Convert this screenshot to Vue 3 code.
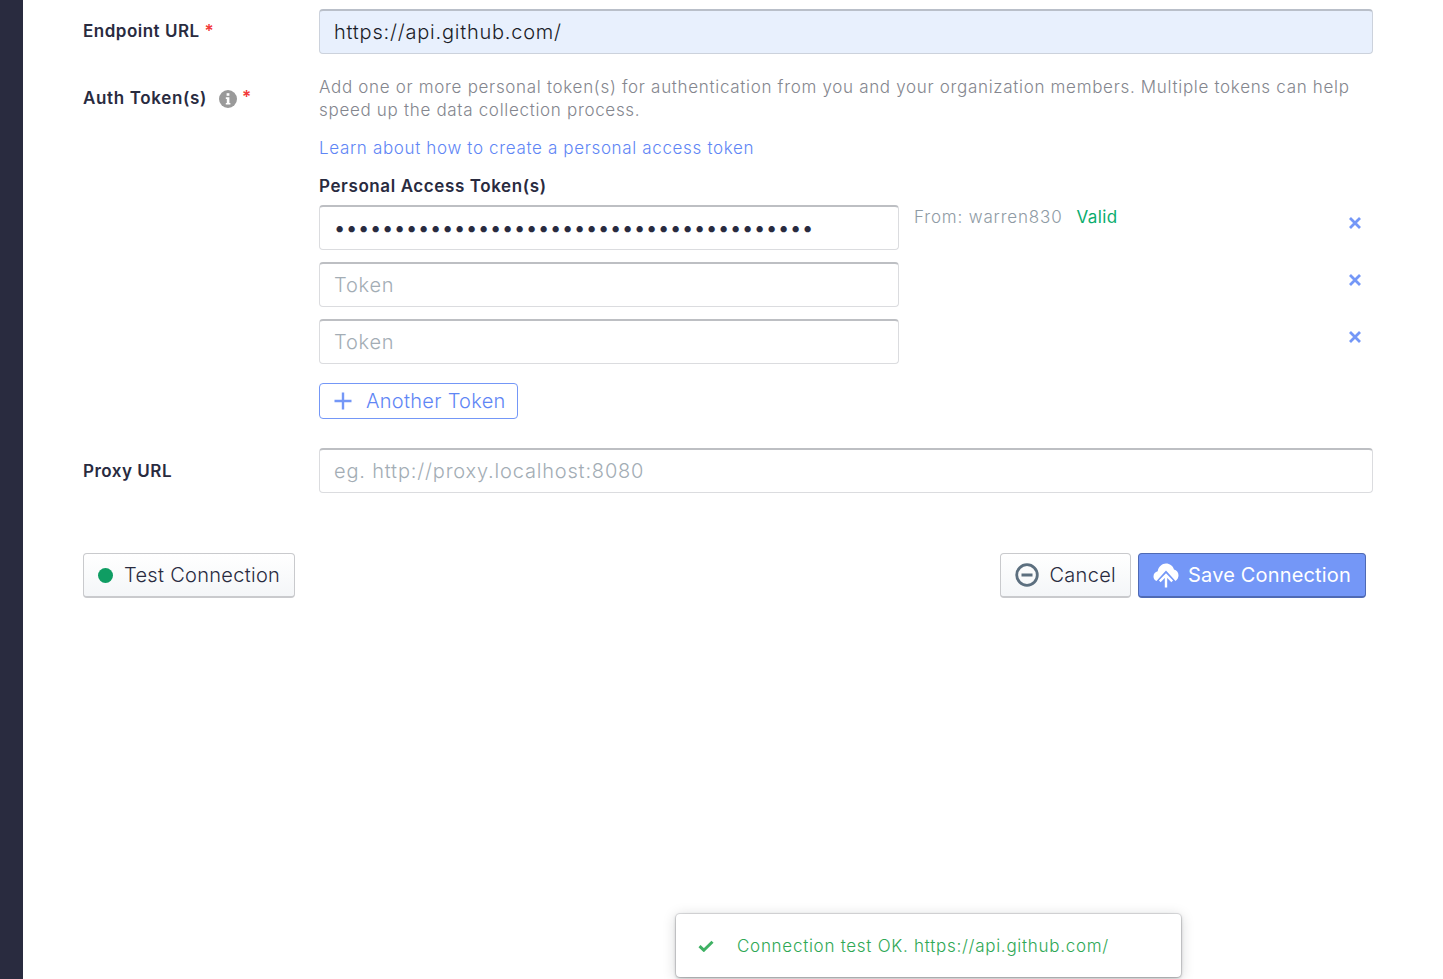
<script setup>
const tokens = [
  { value: 'ghp_0123456789abcdefghijklmnopqrstuvwxyz', type: 'password', meta: true },
  { value: '', type: 'text', meta: false },
  { value: '', type: 'text', meta: false },
]
</script>

<template>
  <div class="shell">
    <aside class="rail"></aside>
    <main class="page">
      <div class="row endpoint">
        <label class="label"><span>Endpoint URL</span><span class="req">*</span></label>
        <input class="field filled" value="https://api.github.com/" />
      </div>

      <div class="row auth">
        <label class="label auth-label">
          <span>Auth Token(s)</span>
          <svg class="info" viewBox="0 0 18 18" width="18" height="18">
            <circle cx="9" cy="9" r="9" fill="#9a9a9a" />
            <rect x="7.600" y="3.200" width="2.800" height="2.600" fill="#fff" />
            <path d="M6.800 7.300h3.600v5.600h1v1.600H6.800v-1.600h1v-4H6.800z" fill="#fff" />
          </svg>
          <span class="req">*</span>
        </label>
        <div class="auth-body">
          <p class="help">Add one or more personal token(s) for authentication from you and your organization members. Multiple tokens can help speed up the data collection process.</p>
          <a class="learn">Learn about how to create a personal access token</a>
          <div class="pat">Personal Access Token(s)</div>
          <div class="tokens">
            <div v-for="(t, i) in tokens" :key="i" class="token-row">
              <input class="field token" :type="t.type" :value="t.value" placeholder="Token" />
              <div class="meta">
                <template v-if="t.meta">
                  <span class="from">From: warren830</span>
                  <span class="valid">Valid</span>
                </template>
              </div>
              <svg class="remove" viewBox="0 0 14 14" width="14" height="14">
                <path d="M2 2l10 10M12 2L2 12" stroke="#7497f7" stroke-width="2.800" fill="none" />
              </svg>
            </div>
          </div>
          <button class="another">
            <svg viewBox="0 0 18 18" width="18" height="18">
              <path d="M9 0.500v17M0.500 9h17" stroke="#7497f7" stroke-width="2.400" fill="none" />
            </svg>
            <span>Another Token</span>
          </button>
        </div>
      </div>

      <div class="row proxy">
        <label class="label">Proxy URL</label>
        <input class="field proxy-input" placeholder="eg. http://proxy.localhost:8080" />
      </div>

      <div class="actions">
        <button class="btn">
          <span class="dot"></span>
          Test Connection
        </button>
        <div class="actions-right">
          <button class="btn cancel">
            <svg viewBox="0 0 24 24" width="24" height="24">
              <circle cx="12" cy="12" r="10.300" stroke="#5c6f7f" stroke-width="2.800" fill="none" />
              <path d="M6.500 12h11" stroke="#5c6f7f" stroke-width="3" />
            </svg>
            Cancel
          </button>
          <button class="btn save">
            <svg viewBox="0 0 26 26" width="26" height="26">
              <path d="M3.500 19C1.500 18 .5 16.500 .5 14.500c0-2.600 1.800-4.700 4.200-5.200C5.500 4.600 9 1.500 13 1.500c3.800 0 7 2.500 8 6 2.600.6 4.500 3 4.500 5.800 0 2.200-1 4.300-3 5.700L13 8.500z" fill="#fff" />
              <path d="M13 25.500V13.500M6.800 19.300L13 13l6.200 6.300" stroke="#fff" stroke-width="2.400" fill="none" />
            </svg>
            Save Connection
          </button>
        </div>
      </div>
    </main>

    <div class="toast">
      <svg viewBox="0 0 16 12" width="16" height="12">
        <path d="M1.500 6.200l4.300 4 8.700-8.500" stroke="#3fb164" stroke-width="3" fill="none" />
      </svg>
      <span>Connection test OK. https://api.github.com/</span>
    </div>
  </div>
</template>

<style>
html, body { margin: 0; background: #fff; overflow: hidden; }
</style>

<style scoped>
.shell {
  position: relative;
  display: flex;
  width: 1443px;
  height: 979px;
  overflow: hidden;
  font-family: Inter, "Liberation Sans", sans-serif;
  color: #292b3f;
}
.rail { width: 23px; flex: none; background: #292b3f; }
.page {
  flex: none;
  width: 1290px;
  padding: 9px 0 0 60px;
}
.row { display: flex; align-items: flex-start; }
.label {
  flex: none;
  width: 236px;
  display: flex;
  align-items: center;
  font-size: 17px;
  font-weight: 600;
  letter-spacing: 0.5px;
  color: #292b3f;
}
.endpoint .label { padding-top: 12px; line-height: 21px; }
.req { color: #f23a3a; font-size: 17px; margin-left: 5px; font-weight: 600; margin-top: -1px; letter-spacing: 0; }
.info { margin: 0 5px 0 12px; }
.auth-label .req { margin-left: 0; margin-top: -3px; }
.field {
  box-sizing: border-box;
  flex: 1;
  min-width: 0;
  height: 45px;
  padding: 0 14px;
  border: 1px solid #dbdcdf;
  border-top: 2px solid #bdbfc3;
  border-radius: 4px;
  background: #fff;
  font-family: inherit;
  font-size: 20px;
  font-weight: 300;
  letter-spacing: 0.78px;
  color: #292b3f;
  outline: none;
}
.field::placeholder { color: #a3adb5; opacity: 1; }
.proxy-input { letter-spacing: 0.82px; }
.filled { background: #e8f0fd; border-color: #ccd2dc; border-top-color: #b9bfc9; color: #1a1c28; }
.auth { margin-top: 22px; }
.auth-label { padding-top: 12px; line-height: 21px; letter-spacing: 0.65px; }
.auth-body { flex: 1; min-width: 0; }
.help {
  margin: 0;
  font-size: 17px;
  font-weight: 300;
  line-height: 23px;
  color: #84868e;
  letter-spacing: 0.685px;
}
.learn {
  display: block;
  margin-top: 15px;
  font-size: 17px;
  font-weight: 300;
  line-height: 23px;
  color: #5f86f5;
  letter-spacing: 0.65px;
}
.pat {
  margin-top: 15px;
  font-size: 17px;
  font-weight: 600;
  line-height: 23px;
  color: #292b3f;
  letter-spacing: 0.6px;
}
.tokens { margin-top: 7px; display: flex; flex-direction: column; gap: 12px; }
.token-row { display: flex; align-items: flex-start; height: 45px; }
.token { flex: none; width: 580px; }
.token[type="password"] { letter-spacing: 0.75px; font-weight: 400; }
.meta { flex: 1; padding: 2px 0 0 15px; font-size: 17px; font-weight: 300; line-height: 21px; display: flex; gap: 14px; letter-spacing: 0.83px; }
.from { color: #8f9ba5; }
.valid { color: #09ad6d; letter-spacing: 0.4px; font-weight: 400; }
.remove { flex: none; margin: 11px 11px 0 0; }
.another {
  display: flex;
  align-items: center;
  gap: 14px;
  box-sizing: border-box;
  width: 199px;
  height: 36px;
  margin-top: 19px;
  padding: 0 0 0 14px;
  border: 1px solid #7497f7;
  border-radius: 4px;
  background: #fff;
  font-family: inherit;
  font-size: 20px;
  font-weight: 300;
  letter-spacing: 0.3px;
  color: #5f86f5;
}
.proxy { margin-top: 29px; }
.proxy .label { padding-top: 12px; line-height: 23px; }
.actions {
  display: flex;
  justify-content: space-between;
  margin-top: 60px;
  padding-right: 7px;
}
.actions-right { display: flex; gap: 7px; }
.btn {
  display: flex;
  align-items: center;
  box-sizing: border-box;
  height: 45px;
  padding: 0 14px;
  border: 1px solid #c9cacd;
  border-bottom-width: 2px;
  border-radius: 4px;
  background: linear-gradient(#fff, #f4f6f8);
  font-family: inherit;
  font-size: 20px;
  font-weight: 300;
  letter-spacing: 0.3px;
  color: #292b3f;
}
.dot { width: 15px; height: 15px; border-radius: 50%; background: #0f9d63; margin-right: 11px; }
.cancel svg { margin-right: 10px; }
.save {
  color: #fff;
  font-weight: 400;
  letter-spacing: 0.17px;
  background: #7497f7;
  border-color: #4f6ab4;
  padding: 0 14px;
}
.save svg { margin-right: 9px; }
.toast {
  position: absolute;
  left: 676px;
  top: 914px;
  box-sizing: border-box;
  width: 505px;
  height: 63px;
  display: flex;
  align-items: center;
  gap: 23px;
  padding: 0 0 0 22px;
  background: #fff;
  border-radius: 4px;
  box-shadow: 0 0 0 1px rgba(16, 22, 26, 0.1), 0 1px 3px rgba(16, 22, 26, 0.3), 0 2px 14px rgba(16, 22, 26, 0.18);
  font-size: 17px;
  font-weight: 300;
  letter-spacing: 0.72px;
  color: #2fa855;
}
</style>
